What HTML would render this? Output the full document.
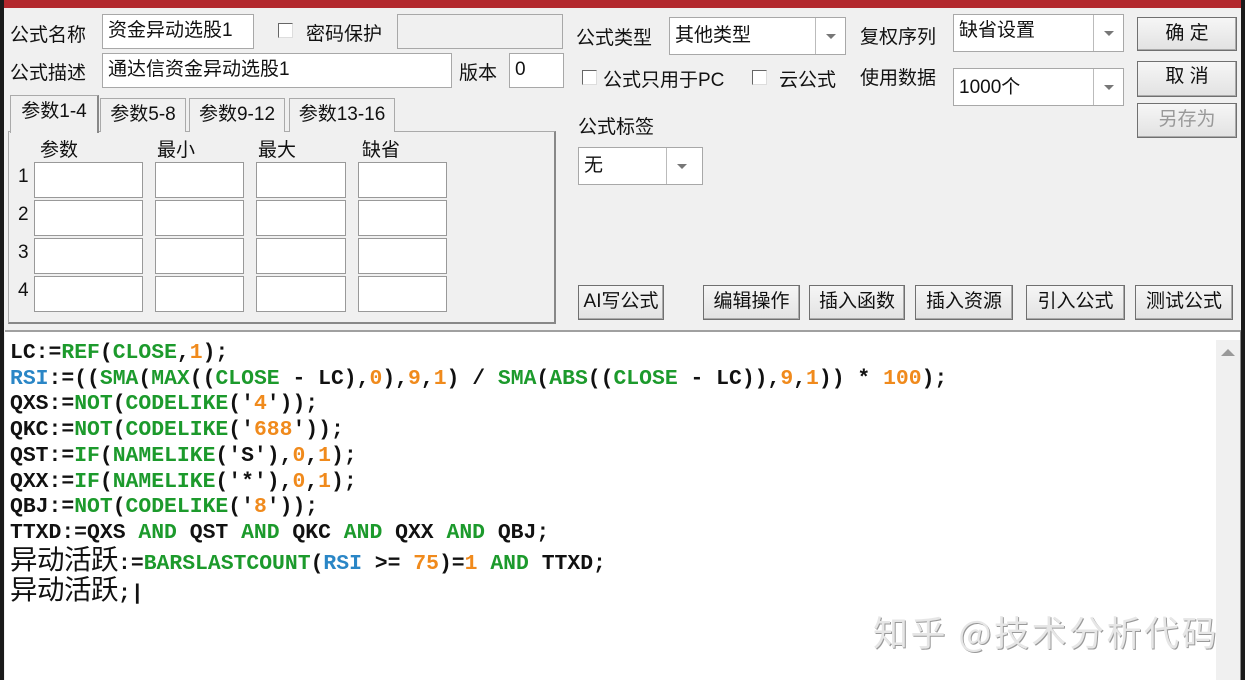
<!DOCTYPE html>
<html><head><meta charset="utf-8"><style>
*{margin:0;padding:0;box-sizing:border-box}
body{width:1245px;height:680px;overflow:hidden;background:#f0f0f0;position:relative;font-family:"Liberation Sans","Noto Sans CJK SC",sans-serif;font-size:19px;color:#111}
.a{position:absolute}
.inp{position:absolute;background:#fff;border:1px solid #a8a8a8;font-size:19px;padding:4px 5px;line-height:26px;white-space:nowrap}
.lbl{position:absolute;font-size:19px;white-space:nowrap}
.cb{position:absolute;width:15px;height:15px;border:1px solid #666;border-right-color:#ddd;border-bottom-color:#ddd;background:#fff}
.btn{position:absolute;border:1px solid #707070;background:linear-gradient(#f6f6f6,#e2e2e2);font-size:19px;text-align:center;box-shadow:inset -1px -1px 0 #aaa;white-space:nowrap}
.dd{position:absolute;top:0;bottom:0;border-left:1px solid #bbb;width:30px;right:0}
.dd:after{content:"";position:absolute;left:10px;top:50%;margin-top:-2px;border:5px solid transparent;border-top:5px solid #777;border-bottom:0}
.tab{position:absolute;top:98px;height:34px;border:1px solid #aaa;border-bottom:none;font-size:19px;text-align:center;line-height:32px;background:#f0f0f0;white-space:nowrap}
.cell{position:absolute;background:#fff;border:1px solid #999}
.code{position:absolute;left:10px;top:341px;font-family:"Liberation Mono","Noto Sans CJK SC",monospace;font-weight:bold;font-size:21.4px;line-height:25.7px;white-space:pre;color:#111}
.g{color:#1c9a2c}.o{color:#f08a1c}.b{color:#2a86c6}
.cj{font-family:"Noto Sans CJK SC",sans-serif;font-weight:normal;font-size:27.5px;letter-spacing:-0.5px;line-height:20px}
</style></head><body>
<div class="a" style="left:0;top:0;width:1245px;height:8px;background:#b3282d"></div>
<div class="a" style="left:0;top:0;width:4px;height:680px;background:#1a1a1a"></div>
<div class="a" style="right:0;top:0;width:4px;height:680px;background:#1a1a1a"></div>

<div class="lbl" style="left:10px;top:20px">公式名称</div>
<div class="inp" style="left:102px;top:14px;width:152px;height:35px;padding-top:3px">资金异动选股1</div>
<div class="cb" style="left:278px;top:23px"></div>
<div class="lbl" style="left:306px;top:19px">密码保护</div>
<div class="inp" style="left:397px;top:14px;width:166px;height:35px;background:#f0f0f0"></div>
<div class="lbl" style="left:10px;top:58px">公式描述</div>
<div class="inp" style="left:102px;top:53px;width:350px;height:35px;padding-top:3px">通达信资金异动选股1</div>
<div class="lbl" style="left:459px;top:58px">版本</div>
<div class="inp" style="left:509px;top:53px;width:55px;height:35px;padding-top:3px">0</div>

<div class="a" style="left:8px;top:131px;width:548px;height:193px;border:1px solid #aaa;border-right:2px solid #888;border-bottom:2px solid #888"></div>
<div class="tab" style="left:100px;width:86px">参数5-8</div>
<div class="tab" style="left:189px;width:96px">参数9-12</div>
<div class="tab" style="left:289px;width:106px">参数13-16</div>
<div class="tab" style="left:10px;width:89px;top:95px;height:38px;border-right:2px solid #888">参数1-4</div>
<div class="lbl" style="left:40px;top:135px">参数</div>
<div class="lbl" style="left:157px;top:135px">最小</div>
<div class="lbl" style="left:258px;top:135px">最大</div>
<div class="lbl" style="left:362px;top:135px">缺省</div>
<div class="lbl" style="left:18px;top:166px">1</div><div class="lbl" style="left:18px;top:204px">2</div><div class="lbl" style="left:18px;top:242px">3</div><div class="lbl" style="left:18px;top:280px">4</div>
<div id="cells"></div>

<div class="lbl" style="left:576px;top:23px">公式类型</div>
<div class="inp" style="left:669px;top:17px;width:177px;height:38px;padding-top:5px">其他类型<div class="dd"></div></div>
<div class="lbl" style="left:860px;top:22px">复权序列</div>
<div class="inp" style="left:953px;top:14px;width:171px;height:38px;padding-top:3px">缺省设置<div class="dd"></div></div>
<div class="cb" style="left:582px;top:70px"></div>
<div class="lbl" style="left:603px;top:65px">公式只用于PC</div>
<div class="cb" style="left:752px;top:70px"></div>
<div class="lbl" style="left:779px;top:65px">云公式</div>
<div class="lbl" style="left:860px;top:63px">使用数据</div>
<div class="inp" style="left:953px;top:68px;width:171px;height:38px;padding-top:6px">1000个<div class="dd"></div></div>
<div class="btn" style="left:1137px;top:17px;width:100px;height:34px;line-height:32px">确 定</div>
<div class="btn" style="left:1137px;top:61px;width:100px;height:36px;line-height:30px">取 消</div>
<div class="btn" style="left:1137px;top:103px;width:100px;height:35px;line-height:31px;color:#999">另存为</div>
<div class="lbl" style="left:578px;top:112px">公式标签</div>
<div class="inp" style="left:578px;top:147px;width:125px;height:38px;padding-top:5px">无<div class="dd" style="width:36px"></div></div>

<div class="btn" style="left:578px;top:285px;width:86px;height:35px;line-height:31px">AI写公式</div>
<div class="btn" style="left:703px;top:285px;width:97px;height:35px;line-height:31px">编辑操作</div>
<div class="btn" style="left:809px;top:285px;width:96px;height:35px;line-height:31px">插入函数</div>
<div class="btn" style="left:915px;top:285px;width:98px;height:35px;line-height:31px">插入资源</div>
<div class="btn" style="left:1026px;top:285px;width:99px;height:35px;line-height:31px">引入公式</div>
<div class="btn" style="left:1135px;top:285px;width:98px;height:35px;line-height:31px">测试公式</div>

<div class="a" style="left:5px;top:330px;width:1236px;height:350px;border-top:2px solid #a0a0a0;border-right:1px solid #888;background:#fff"></div>
<div class="a" style="left:1216px;top:340px;width:24px;height:340px;background:#f0f0f0"></div>
<div class="a" style="left:1221px;top:349px;border:7px solid transparent;border-bottom:7px solid #999;border-top:0"></div>

<div class="code">LC:=<span class="g">REF</span>(<span class="g">CLOSE</span>,<span class="o">1</span>);
<span class="b">RSI</span>:=((<span class="g">SMA</span>(<span class="g">MAX</span>((<span class="g">CLOSE</span> - LC),<span class="o">0</span>),<span class="o">9</span>,<span class="o">1</span>) / <span class="g">SMA</span>(<span class="g">ABS</span>((<span class="g">CLOSE</span> - LC)),<span class="o">9</span>,<span class="o">1</span>)) * <span class="o">100</span>);
QXS:=<span class="g">NOT</span>(<span class="g">CODELIKE</span>('<span class="o">4</span>'));
QKC:=<span class="g">NOT</span>(<span class="g">CODELIKE</span>('<span class="o">688</span>'));
QST:=<span class="g">IF</span>(<span class="g">NAMELIKE</span>('S'),<span class="o">0</span>,<span class="o">1</span>);
QXX:=<span class="g">IF</span>(<span class="g">NAMELIKE</span>('*'),<span class="o">0</span>,<span class="o">1</span>);
QBJ:=<span class="g">NOT</span>(<span class="g">CODELIKE</span>('<span class="o">8</span>'));
TTXD:=QXS <span class="g">AND</span> QST <span class="g">AND</span> QKC <span class="g">AND</span> QXX <span class="g">AND</span> QBJ;
<span class="cj">异动活跃</span>:=<span class="g">BARSLASTCOUNT</span>(<span class="b">RSI</span> &gt;= <span class="o">75</span>)=<span class="o">1</span> <span class="g">AND</span> TTXD;
<span class="cj">异动活跃</span>;|</div>

<div class="a" style="left:873px;top:606px;font-family:'Noto Sans CJK SC',sans-serif;font-size:35px;color:#e6e6e6;text-shadow:1px 1px 0 #999;white-space:nowrap;letter-spacing:2.5px">知乎 @技术分析代码</div>

<script>
var xs=[[34,109],[155,89],[256,90],[358,89]],ys=[162,200,238,276],h='';
ys.forEach(function(y){xs.forEach(function(x){h+='<div class="cell" style="left:'+x[0]+'px;top:'+y+'px;width:'+x[1]+'px;height:36px"></div>'})});
document.getElementById('cells').innerHTML=h;
</script>
</body></html>
